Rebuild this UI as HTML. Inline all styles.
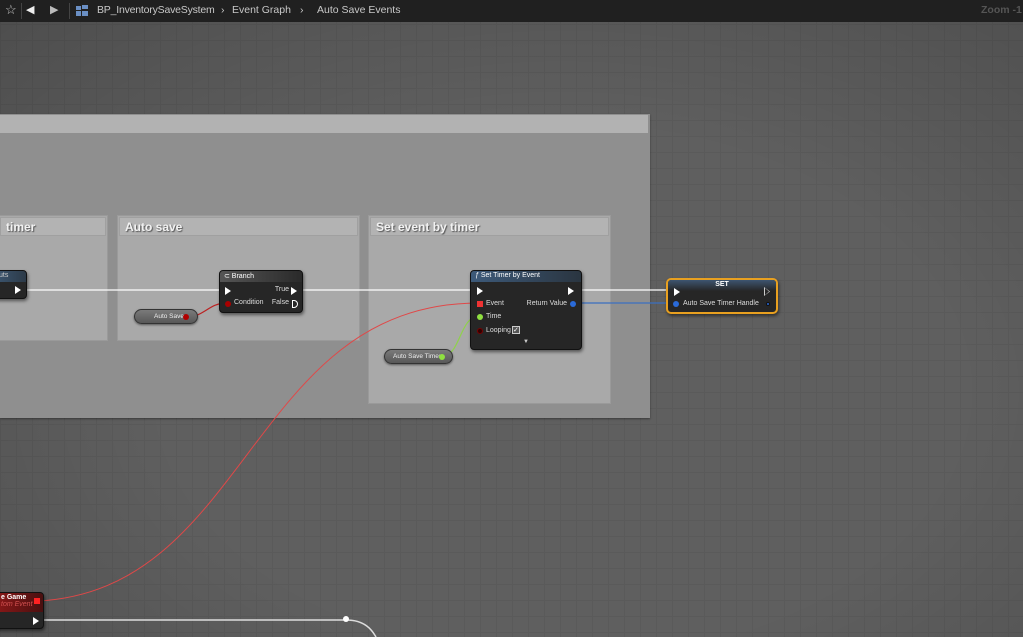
<!DOCTYPE html>
<html><head><meta charset="utf-8"><style>
*{margin:0;padding:0;box-sizing:border-box}
body{width:1023px;height:637px;overflow:hidden;position:relative;font-family:"Liberation Sans",sans-serif;
background-color:#5f5f5f;
background-image:linear-gradient(#5a5a5a 1px,transparent 1px),linear-gradient(90deg,#5a5a5a 1px,transparent 1px);
background-size:16px 16px;background-position:0 8px}
.abs{position:absolute}
.vig{position:absolute;left:0;top:22px;width:1023px;height:615px;background:radial-gradient(ellipse at 55% 60%,rgba(0,0,0,0) 50%,rgba(0,0,0,0.18) 100%)}
.top{position:absolute;left:0;top:0;width:1023px;height:22px;background:#202020;color:#c8c8c8;font-size:10.5px}
.top span{position:absolute;top:4px;white-space:nowrap}
.cm{position:absolute;background:#8f8f8f;box-shadow:0 1px 2px rgba(0,0,0,.4)}
.cmh{position:absolute;background:#b2b2b2}
.ib{position:absolute;background:#a9a9a9;border:1px solid #9a9a9a}
.ibh{position:absolute;left:1px;right:1px;top:1px;height:19px;background:#b3b3b3;border:1px solid #a0a0a0;color:#f2f2f2;font-weight:bold;font-size:12px;padding:2px 5px;text-shadow:1px 1px 1px #555}
.node{position:absolute;background:#262626;border:1px solid #111;border-radius:4px;box-shadow:1px 2px 3px rgba(0,0,0,.5);color:#ddd;font-size:7px}
.nh{position:absolute;left:0;right:0;top:0;height:11px;border-radius:3px 3px 0 0;color:#fff;font-size:7px;padding:1px 4px}
.t{position:absolute;white-space:nowrap}
.exec{position:absolute;width:0;height:0;border-top:4px solid transparent;border-bottom:4px solid transparent;border-left:6px solid #fff}
.dot{position:absolute;width:6px;height:6px;border-radius:50%}
.var{position:absolute;height:15px;border-radius:8px;background:linear-gradient(#7a7a7a,#585858);border:1px solid #333;box-shadow:0 1px 2px rgba(0,0,0,.5);color:#eee;font-size:6.5px;padding-top:3px;white-space:nowrap}
</style></head><body>
<div class="vig"></div>
<div class="top">
<span style="left:5px;top:2px;font-size:13px">☆</span>
<div class="abs" style="left:21px;top:3px;width:1px;height:16px;background:#444"></div>
<span style="left:26px;top:3px;font-size:11px;color:#eee">◀</span>
<span style="left:50px;top:3px;font-size:11px;color:#bbb">▶</span>
<div class="abs" style="left:69px;top:3px;width:1px;height:16px;background:#444"></div>
<div class="abs" style="left:76px;top:6px;width:5px;height:4px;background:#6a8fc4"></div>
<div class="abs" style="left:82px;top:5px;width:6px;height:4px;background:#6a8fc4"></div>
<div class="abs" style="left:76px;top:11px;width:5px;height:5px;background:#6a8fc4"></div>
<div class="abs" style="left:82px;top:11px;width:6px;height:5px;background:#6a8fc4"></div>
<span style="left:97px;letter-spacing:-0.2px">BP_InventorySaveSystem</span>
<span style="left:221px">›</span>
<span style="left:232px">Event Graph</span>
<span style="left:300px">›</span>
<span style="left:317px">Auto Save Events</span>
<span style="left:981px;color:#555;font-weight:bold">Zoom -1</span>
</div>

<div class="cm" style="left:0;top:114px;width:650px;height:304px"></div>
<div class="cmh" style="left:0;top:115px;width:648px;height:18px"></div>

<div class="ib" style="left:-2px;top:215px;width:110px;height:126px"><div class="ibh">timer</div></div>
<div class="ib" style="left:117px;top:215px;width:243px;height:126px"><div class="ibh">Auto save</div></div>
<div class="ib" style="left:368px;top:215px;width:243px;height:189px"><div class="ibh">Set event by timer</div></div>

<svg class="abs" style="left:0;top:0" width="1023" height="637">
<path d="M0 290 H227 M296 290 H479 M574 290 H676" stroke="#fff" stroke-width="1.3" fill="none"/>
<path d="M572 303 H676" stroke="#3a6fc0" stroke-width="1.2" fill="none"/>
<path d="M186 317 C205 317 208 303 227 303" stroke="#b22" stroke-width="1.2" fill="none"/>
<path d="M443 356 C460 356 460 316 479 316" stroke="#8fd24a" stroke-width="1.2" fill="none"/>
<path d="M38 601 C250 590 250 303 479 303" stroke="#e04848" stroke-width="1" fill="none"/>
<path d="M44 620 H346 C365 620 372 630 376 637" stroke="#ddd" stroke-width="1.5" fill="none"/>
<circle cx="346" cy="619" r="3" fill="#fff"/>
</svg>

<div class="node" style="left:-6px;top:270px;width:33px;height:29px">
<div class="nh" style="background:linear-gradient(90deg,#3c5670,#2c3a48);color:#ccc">uts</div>
<div class="exec" style="left:20px;top:15px"></div></div>

<div class="node" style="left:219px;top:270px;width:84px;height:43px">
<div class="nh" style="background:linear-gradient(90deg,#555,#2a2a2a)">⊂ Branch</div>
<div class="exec" style="left:5px;top:16px"></div>
<div class="t" style="right:13px;top:15px">True</div><div class="exec" style="right:5px;top:16px"></div>
<div class="dot" style="left:5px;top:30px;background:#a00"></div>
<div class="t" style="left:14px;top:28px">Condition</div>
<div class="t" style="right:13px;top:28px">False</div>
<div class="abs" style="right:4px;top:29px;width:6px;height:8px;border:1px solid #fff;border-radius:0 4px 4px 0"></div>
</div>
<div class="var" style="left:134px;top:309px;width:64px;padding-left:19px">Auto Save</div>
<div class="dot" style="left:183px;top:314px;background:#b00000"></div>

<div class="node" style="left:470px;top:270px;width:112px;height:80px">
<div class="nh" style="background:linear-gradient(90deg,#3d5a7a,#2a3540)"><i>ƒ</i> Set Timer by Event</div>
<div class="exec" style="left:6px;top:16px"></div><div class="exec" style="right:7px;top:16px"></div>
<div class="abs" style="left:6px;top:30px;width:6px;height:6px;background:#e33"></div>
<div class="t" style="left:15px;top:29px">Event</div>
<div class="t" style="right:14px;top:29px">Return Value</div>
<div class="dot" style="right:5px;top:30px;background:#2a6ad8"></div>
<div class="dot" style="left:6px;top:43px;background:#8fe040"></div>
<div class="t" style="left:15px;top:42px">Time</div>
<div class="dot" style="left:6px;top:57px;border:1px solid #700;background:#300"></div>
<div class="t" style="left:15px;top:56px">Looping</div>
<div class="abs" style="left:41px;top:55px;width:8px;height:8px;border:1px solid #ccc;background:#555;color:#fff;font-size:7px;line-height:7px">✓</div>
<div class="t" style="left:52px;top:68px;font-size:6px;color:#ccc">▼</div>
</div>
<div class="var" style="left:384px;top:349px;width:69px;padding-left:8px">Auto Save Timer</div>
<div class="dot" style="left:439px;top:354px;background:#8fe040"></div>

<div class="node" style="left:666px;top:278px;width:112px;height:36px;border:2px solid #e8a020;border-radius:5px">
<div class="nh" style="background:linear-gradient(#3d5570,#262626);text-align:center;font-weight:bold">SET</div>
<div class="exec" style="left:6px;top:8px"></div>
<div class="abs" style="right:6px;top:7px;width:6px;height:9px;clip-path:polygon(0 0,100% 50%,0 100%);background:#ccc"></div>
<div class="abs" style="right:7px;top:8px;width:4px;height:7px;background:#262626;clip-path:polygon(0 0,100% 50%,0 100%)"></div>
<div class="dot" style="left:5px;top:21px;background:#2a6ad8"></div>
<div class="t" style="left:15px;top:20px">Auto Save Timer Handle</div>
<div class="dot" style="right:6px;top:22px;width:4px;height:4px;background:#2a6ad8;border:1px solid #111"></div>
</div>

<div class="node" style="left:-6px;top:592px;width:50px;height:37px">
<div class="nh" style="height:19px;background:linear-gradient(90deg,#8a1818,#4a1010);font-weight:bold;padding-left:6px">e Game<br><span style="font-weight:normal;color:#d05050;font-style:italic">tom Event</span></div>
<div class="abs" style="right:3px;top:5px;width:6px;height:6px;background:#f22"></div>
<div class="exec" style="right:4px;top:24px"></div>
</div>
</body></html>
